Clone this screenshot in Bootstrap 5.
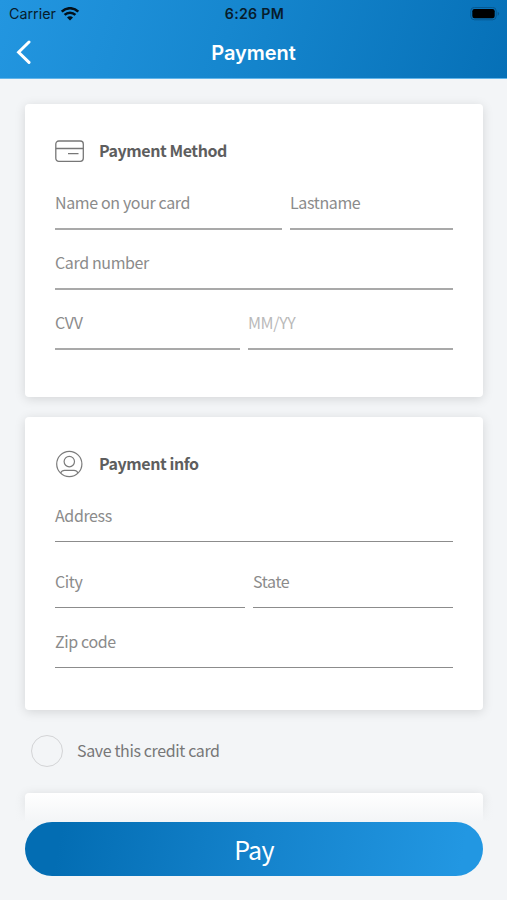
<!DOCTYPE html>
<html lang="en">
<head>
<meta charset="utf-8">
<meta name="viewport" content="width=device-width, initial-scale=1">
<title>Payment</title>
<link href="https://cdn.jsdelivr.net/npm/bootstrap@5.3.0/dist/css/bootstrap.min.css" rel="stylesheet">
<style>
  body { background: #f3f5f7; font-family: "Noto Sans CJK JP", "Noto Sans", sans-serif; font-size: 16px; letter-spacing: -.37px; color: #8b8b8b; }
  .screen { height: 900px; }
  .topbar { height: 79px; background: linear-gradient(108deg, #2396e0 0%, #1687cf 45%, #0670b7 100%); border-bottom: 1px solid #62b5ea; font-family: Inter, sans-serif; letter-spacing: 0; }
  .status { height: 28px; padding: 0 7px 0 9px; font-size: 13.7px; color: #071c2c; }
  .carrier { font-size: 14.3px; }
  .clock { font-weight: 600; font-size: 14.2px; letter-spacing: .3px; }
  .titlebar { height: 49px; color: #fff; padding: 0 15px; }
  .page-title { font-size: 20px; font-weight: 600; letter-spacing: -.05px; line-height: 24px; }
  .content { padding: 25px 24px 0 25px; }
  .panel { height: 293px; padding: 29px 30px 0; border: 0; border-radius: 4px; box-shadow: 0 2px 11px rgba(0,0,0,.13); margin-bottom: 20px; }
  .panel-head { height: 37px; padding-bottom: 1px; color: #5e5e5e; font-weight: 700; line-height: 24px; letter-spacing: -.44px; gap: 14px; }
  .panel-head span { padding-bottom: 2px; }
  .field { height: 60px; padding-bottom: 14px; border-bottom: 2px solid #a9a9a9; line-height: 24px; }
  .info .panel-head { height: 36px; padding-bottom: 0; }
  .info .field { border-bottom: 1px solid #8c8c8c; }
  .info .field.tall { height: 66px; }
  .pair { display: grid; gap: 8px; }
  .pair-name { grid-template-columns: 227fr 163fr; }
  .pair-code { grid-template-columns: 185fr 205fr; }
  .pair-city { grid-template-columns: 190fr 200fr; }
  .hint { color: #b9b9b9; }
  .save { height: 32px; margin: 25px 0 26px 6px; gap: 14px; color: #777; }
  .save span + span { padding-bottom: 2px; }
  .ring { width: 32px; height: 32px; border: 1px solid #d3d4d6; }
  .paybar { height: 107px; padding: 29px 24px 0 25px; background: linear-gradient(rgba(243,245,247,0), #f3f5f7 29px); }
  .pay { height: 54px; border: 0; font-size: 25px; letter-spacing: -.7px; line-height: 53px; padding: 0; color: #fff; background: linear-gradient(100deg, #036db3 8%, #1482cb 50%, #2297e2 95%); }
</style>
<script src="https://cdn.jsdelivr.net/npm/bootstrap@5.3.0/dist/js/bootstrap.bundle.min.js"></script>
</head>
<body>
<div class="screen position-relative overflow-hidden">
  <header class="topbar">
    <div class="status row g-0 align-items-center">
      <div class="col d-flex align-items-center gap-1">
        <span class="carrier">Carrier</span>
        <svg width="20" height="15" viewBox="0 0 20 15" fill="none" stroke="#03101a" stroke-width="2.5"><path d="M1.7 4.6a11.8 11.8 0 0 1 16.6 0M4.6 7.9a7.6 7.6 0 0 1 10.8 0"/><path d="M10 13.6l-3-3a4.2 4.2 0 0 1 6 0z" fill="#03101a" stroke="none"/></svg>
      </div>
      <div class="col-auto clock">6:26 PM</div>
      <div class="col d-flex justify-content-end">
        <svg width="30" height="14" viewBox="0 0 30 14"><rect x=".8" y=".4" width="25.4" height="12.4" rx="3.6" fill="none" stroke="#07588f"/><rect x="2.3" y="2" width="22.4" height="9.2" rx="2.2" fill="#000"/><path d="M27.7 4.7v4q1.4-.6 1.4-2t-1.4-2" fill="#07588f"/></svg>
      </div>
    </div>
    <div class="titlebar row g-0 align-items-center">
      <div class="col d-flex"><svg width="18" height="26" viewBox="0 0 18 26" fill="none" stroke="#fff" stroke-width="3" stroke-linecap="round"><path d="M14 2L3.6 12.2 14 22.4"/></svg></div>
      <div class="col-auto page-title">Payment</div>
      <div class="col"></div>
    </div>
  </header>

  <main class="content">
    <section class="card panel">
      <div class="panel-head d-flex align-items-center">
        <svg width="30" height="24" viewBox="0 0 30 24" fill="none" stroke="#777" stroke-width="1.3"><rect x=".8" y="2" width="27.5" height="20.3" rx="3"/><path d="M.8 9.5h27.5M13 14.6h10.5"/></svg>
        <span>Payment Method</span>
      </div>
      <div class="pair pair-name">
        <div class="field d-flex align-items-end">Name on your card</div>
        <div class="field d-flex align-items-end">Lastname</div>
      </div>
      <div class="field d-flex align-items-end">Card number</div>
      <div class="pair pair-code">
        <div class="field d-flex align-items-end">CVV</div>
        <div class="field hint d-flex align-items-end">MM/YY</div>
      </div>
    </section>

    <section class="card panel info">
      <div class="panel-head d-flex align-items-center">
        <svg width="30" height="30" viewBox="0 0 30 30" fill="none" stroke="#7b7b7b" stroke-width="1.2"><circle cx="14.3" cy="15" r="12.6"/><circle cx="14.3" cy="12.6" r="5.2"/><path d="M5.6 24q1.2-2.7 4-2.7h9.4q2.8 0 4 2.7"/></svg>
        <span>Payment info</span>
      </div>
      <div class="field d-flex align-items-end">Address</div>
      <div class="pair pair-city">
        <div class="field tall d-flex align-items-end">City</div>
        <div class="field tall d-flex align-items-end">State</div>
      </div>
      <div class="field d-flex align-items-end">Zip code</div>
    </section>

    <div class="save d-flex align-items-center">
      <span class="ring rounded-circle"></span>
      <span>Save this credit card</span>
    </div>
    <section class="card panel"></section>
  </main>

  <footer class="paybar position-absolute bottom-0 start-0 w-100">
    <button type="button" class="btn pay rounded-pill w-100">Pay</button>
  </footer>
</div>
</body>
</html>
